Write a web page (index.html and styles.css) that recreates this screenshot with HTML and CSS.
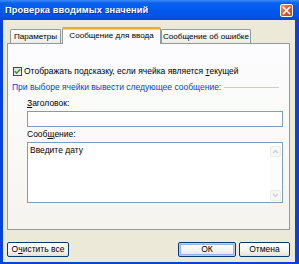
FILE: index.html
```html
<!DOCTYPE html>
<html lang="ru">
<head>
<meta charset="utf-8">
<link rel="stylesheet" href="styles.css">
</head>
<body>
<div class="window">
  <div class="titlebar">
    <span class="title">Проверка вводимых значений</span>
    <span class="close">
      <svg width="9" height="9" viewBox="0 0 9 9"><path d="M1.5 1.5 L7.5 7.5 M7.5 1.5 L1.5 7.5" stroke="#fff" stroke-width="1.6" stroke-linecap="square"/></svg>
    </span>
  </div>
  <div class="client">
    <div class="tabs">
      <div class="tab first">Параметры</div>
      <div class="tab active">Сообщение для ввода</div>
      <div class="tab last">Сообщение об ошибке</div>
    </div>
    <div class="panel">
      <div class="check-row">
        <span class="checkbox"><svg width="7" height="7" viewBox="0 0 7 7"><path d="M0.8 3.2 L2.6 5.2 L6.2 1.2" fill="none" stroke="#21A121" stroke-width="1.5"/></svg></span>
        <span class="check-text">Отображать подсказку, если ячейка является <u>т</u>екущей</span>
      </div>
      <div class="group-title"><span class="group-text">При выборе ячейки вывести следующее сообщение:</span><span class="rule"></span></div>
      <div class="field-label"><u>З</u>аголовок:</div>
      <div class="input"></div>
      <div class="field-label second">Сооб<u>щ</u>ение:</div>
      <div class="textarea">
        <span class="ta-text">Введите дату</span>
        <div class="scrollbar">
          <span class="arrow"><svg width="7" height="5" viewBox="0 0 7 5"><path d="M1 4 L3.5 1.5 L6 4" fill="none" stroke="#C4CAD6" stroke-width="1.2"/></svg></span>
          <span class="arrow"><svg width="7" height="5" viewBox="0 0 7 5"><path d="M1 1 L3.5 3.5 L6 1" fill="none" stroke="#C4CAD6" stroke-width="1.2"/></svg></span>
        </div>
      </div>
    </div>
    <div class="buttons">
      <span class="btn clear">О<u>ч</u>истить все</span>
      <span class="spacer"></span>
      <span class="btn ok">ОК</span>
      <span class="btn cancel">Отмена</span>
    </div>
  </div>
</div>
</body>
</html>
```

FILE: styles.css
```css
html, body {
  margin: 0;
  padding: 0;
  background: #ffffff;
}

.window {
  width: 299px;
  height: 264px;
  box-sizing: border-box;
  display: flex;
  flex-direction: column;
  background: #0842D6;
  font-family: "Liberation Sans", Arial, sans-serif;
  font-size: 8.5px;
  color: #000;
}

.titlebar {
  height: 20px;
  flex: none;
  display: flex;
  align-items: center;
  background: linear-gradient(#3C8CF6 0px, #0A62EE 3px, #0058EE 10px, #0553E6 16px, #0848CF 20px);
  padding: 0 6px 0 5px;
}

.title {
  flex: 1;
  color: #fff;
  font-weight: bold;
  font-size: 9.3px;
  letter-spacing: 0.1px;
  text-shadow: 1px 1px 0 #0A2F9A;
}

.close {
  width: 11px;
  height: 11px;
  border: 1px solid #fff;
  border-radius: 2px;
  background: linear-gradient(135deg, #F09A7A 0%, #E35A2E 45%, #C9401A 100%);
  display: flex;
  align-items: center;
  justify-content: center;
}

.client {
  flex: 1;
  margin: 0 4px 3px 3px;
  background: #ECE9D8;
  padding: 7px 5px 5px 4px;
  display: flex;
  flex-direction: column;
}

.tabs {
  height: 16px;
  display: flex;
  align-items: flex-end;
  padding-left: 3px;
}

.tab {
  height: 14px;
  box-sizing: border-box;
  border: 1px solid #919B9C;
  border-bottom: none;
  border-radius: 2px 2px 0 0;
  background: linear-gradient(#FFFFFF, #F3F2EC 70%, #ECEBE4);
  font-size: 8.1px;
  line-height: 13px;
  white-space: nowrap;
  display: flex;
  justify-content: center;
}

.tab.first {
  width: 51px;
  margin-right: 1px;
}

.tab.active {
  height: 17px;
  margin-bottom: -1px;
  position: relative;
  z-index: 1;
  width: 99px;
  border-top: 2px solid #F6A53A;
  background: #FCFCFE;
  line-height: 14px;
  box-shadow: inset 0 1px 0 #FFD468;
}

.tab.last {
  width: 90px;
}

.panel {
  height: 187px;
  box-sizing: border-box;
  border: 1px solid #919B9C;
  background: linear-gradient(#FCFCFE 0%, #FAF9F6 60%, #F4F3EE 100%);
  display: flex;
  flex-direction: column;
  padding: 0 9px 0 4px;
}

.check-row {
  margin-top: 22px;
  height: 11px;
  display: flex;
  align-items: center;
  padding-left: 1px;
}

.checkbox {
  width: 9px;
  height: 9px;
  box-sizing: border-box;
  border: 1px solid #1C5180;
  background: linear-gradient(135deg, #DCDBD5, #FFFFFF);
  display: flex;
  align-items: center;
  justify-content: center;
  margin-right: 2px;
}

.check-text {
  line-height: 11px;
}

.group-title {
  margin-top: 5px;
  height: 11px;
  display: flex;
  align-items: center;
  color: #0046D5;
}

.group-text {
  white-space: nowrap;
  line-height: 11px;
}

.rule {
  flex: 1;
  height: 1px;
  background: #D0D0BF;
  margin-left: 3px;
  margin-right: 1px;
}

.field-label {
  margin-top: 5px;
  margin-left: 15px;
  line-height: 11px;
  height: 11px;
}

.field-label.second {
  margin-top: 2px;
}

.input {
  margin-top: 2px;
  margin-left: 15px;
  width: 256px;
  height: 16px;
  box-sizing: border-box;
  border: 1px solid #7F9DB9;
  background: #fff;
}

.textarea {
  margin-top: 2px;
  margin-left: 15px;
  width: 256px;
  height: 61px;
  box-sizing: border-box;
  border: 1px solid #7F9DB9;
  background: #fff;
  display: flex;
}

.ta-text {
  flex: 1;
  padding: 2px 0 0 2px;
  line-height: 11px;
}

.scrollbar {
  width: 11px;
  margin: 3px 1px 1px 0;
  background: #FCFCFC;
  display: flex;
  flex-direction: column;
  justify-content: space-between;
}

.arrow {
  height: 9px;
  border: 1px solid #EEEDE5;
  border-radius: 2px;
  background: #F7F7F5;
  display: flex;
  align-items: center;
  justify-content: center;
}

.buttons {
  margin-top: 12px;
  height: 15px;
  display: flex;
}

.spacer {
  flex: 1;
}

.btn {
  height: 15px;
  box-sizing: border-box;
  border: 1px solid #003C74;
  border-radius: 2px;
  background: linear-gradient(#FFFFFF, #F5F4EE 60%, #E3E0D3);
  display: flex;
  align-items: center;
  justify-content: center;
  line-height: 11px;
}

.btn.clear {
  width: 62px;
}

.btn.ok {
  width: 58px;
  box-shadow: inset 0 0 0 1px #B7CEF8, inset 0 0 0 2px #98B4F0;
}

.btn.cancel {
  width: 51px;
  margin-left: 3px;
}
```
